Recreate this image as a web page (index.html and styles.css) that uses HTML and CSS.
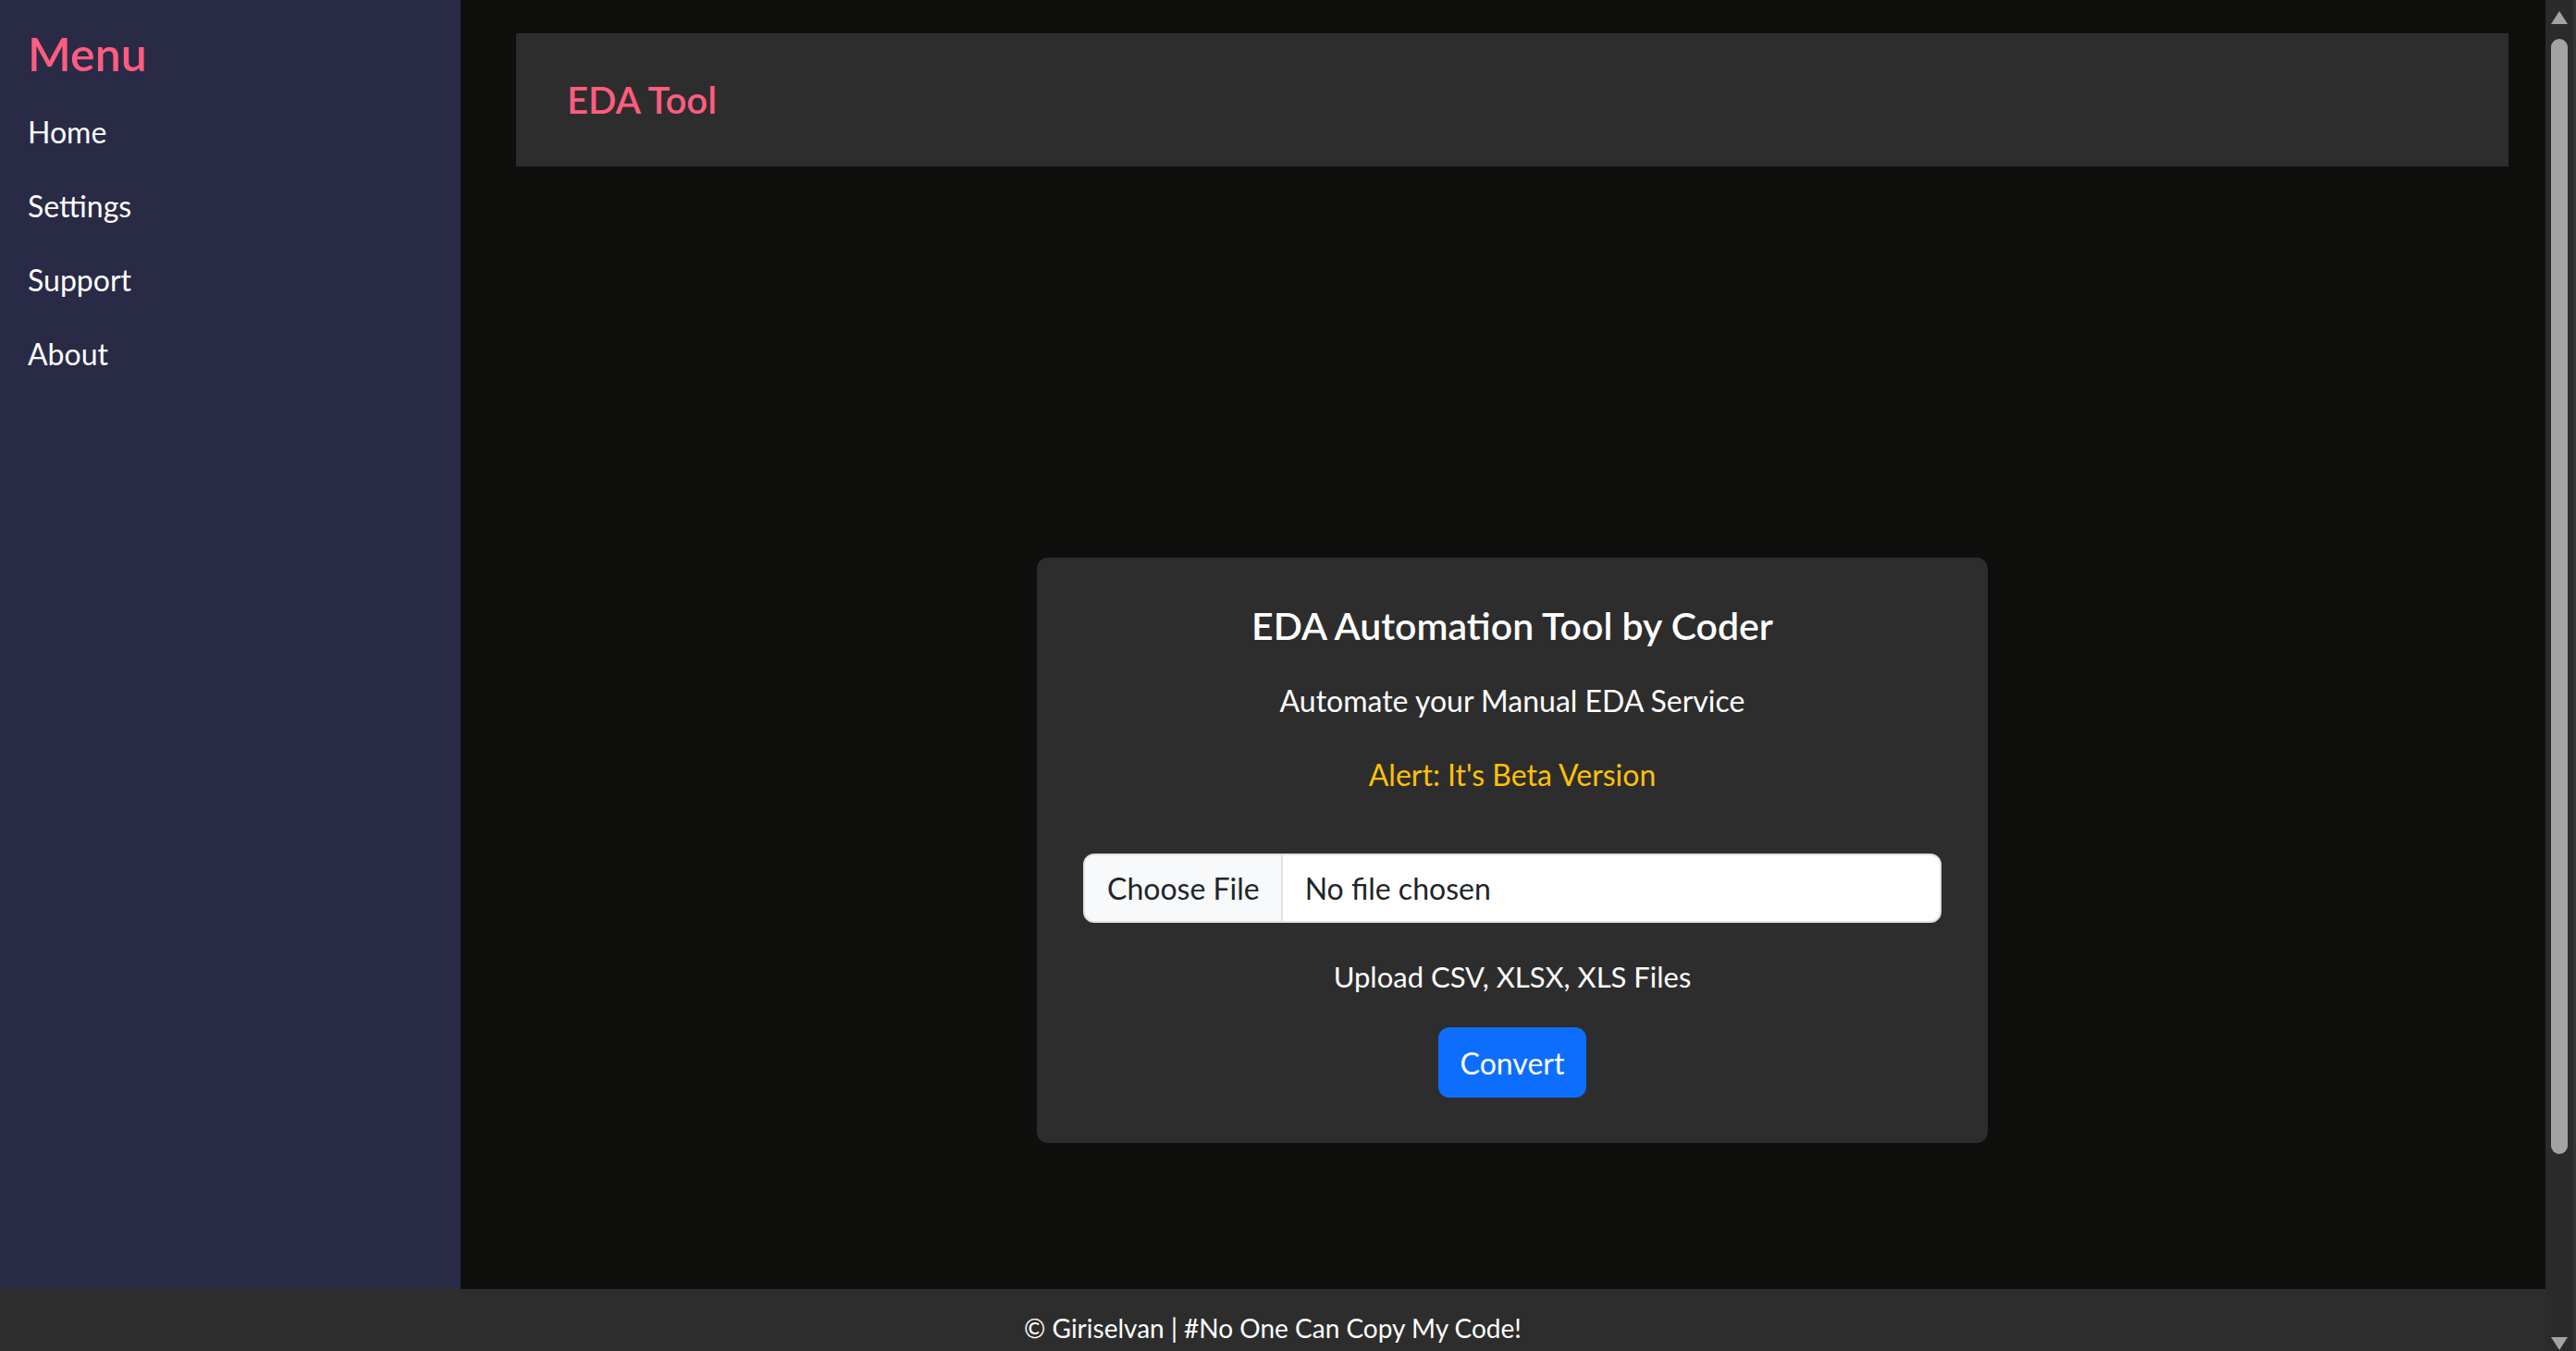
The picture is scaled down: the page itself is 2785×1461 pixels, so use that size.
FILE: index.html
```html
<!DOCTYPE html>
<html lang="en">
<head>
<meta charset="utf-8">
<title>EDA Tool</title>
<link rel="stylesheet" href="styles.css">
</head>
<body>
<div class="viewport">
  <div class="page">
    <div class="layout">
      <nav class="sidebar">
        <h2 class="menu-title">Menu</h2>
        <ul class="menu">
          <li><a href="#">Home</a></li>
          <li><a href="#">Settings</a></li>
          <li><a href="#">Support</a></li>
          <li><a href="#">About</a></li>
        </ul>
      </nav>
      <main class="main">
        <header class="topbar">
          <h1 class="brand">EDA Tool</h1>
        </header>
        <section class="stage">
          <div class="card">
            <h2 class="card-title">EDA Automation Tool by Coder</h2>
            <p class="card-sub">Automate your Manual EDA Service</p>
            <p class="card-alert">Alert: It's Beta Version</p>
            <label class="file">
              <span class="file-btn">Choose File</span>
              <span class="file-name">No file chosen</span>
            </label>
            <p class="card-hint">Upload CSV, XLSX, XLS Files</p>
            <button class="convert" type="button">Convert</button>
          </div>
        </section>
      </main>
    </div>
    <footer class="footer">
      <p class="footer-text">© Giriselvan | #No One Can Copy My Code!</p>
    </footer>
  </div>
  <div class="scrollbar">
    <div class="sb-up"><span class="tri-up"></span></div>
    <div class="sb-track"><div class="sb-thumb"></div></div>
    <div class="sb-down"><span class="tri-down"></span></div>
  </div>
</div>
</body>
</html>
```

FILE: styles.css
```css
html, body {
  margin: 0;
  padding: 0;
  height: 100%;
  background: #0f0f0e;
  font-family: "Lato", "Open Sans", sans-serif;
  color: #fff;
}

.viewport {
  display: flex;
  height: 100vh;
  overflow: hidden;
}

.page {
  flex: 1;
  min-width: 0;
  display: flex;
  flex-direction: column;
  overflow: hidden;
}

.layout {
  display: flex;
  height: 1394px;
  flex-shrink: 0;
}

.sidebar {
  width: 498px;
  flex-shrink: 0;
  box-sizing: border-box;
  background: #292a46;
  padding: 28px 0 0 30px;
}

.menu-title {
  margin: 0;
  font-size: 50px;
  line-height: 60px;
  font-weight: 600;
  color: #ff5c7f;
}

.menu {
  list-style: none;
  margin: 15px 0 0;
  padding: 0;
}

.menu a {
  display: block;
  font-size: 32px;
  line-height: 80px;
  color: #fff;
  text-decoration: none;
}

.main {
  flex: 1;
  min-width: 0;
  background: #0f0f0e;
  padding: 36px 40px 0 60px;
  display: flex;
  flex-direction: column;
}

.topbar {
  height: 144px;
  flex-shrink: 0;
  background: #2d2d2d;
  display: flex;
  align-items: center;
  padding-left: 55px;
}

.brand {
  margin: 0;
  font-size: 40px;
  line-height: 48px;
  font-weight: 600;
  color: #ff5c7f;
}

.stage {
  display: flex;
  justify-content: center;
  padding-top: 423px;
}

.card {
  width: 1028px;
  box-sizing: border-box;
  background: #2d2d2d;
  border-radius: 12px;
  padding: 50px 50px 49px;
  text-align: center;
  display: flex;
  flex-direction: column;
  align-items: center;
}

.card-title {
  margin: 0 0 37px;
  font-size: 41px;
  line-height: 48px;
  font-weight: 600;
}

.card-sub,
.card-alert,
.card-hint {
  margin: 0;
  font-size: 32px;
  line-height: 40px;
}

.card-sub {
  margin-bottom: 40px;
}

.card-alert {
  color: #ffc107;
  margin-bottom: 65px;
}

.file {
  align-self: stretch;
  display: flex;
  height: 75px;
  box-sizing: border-box;
  border: 2px solid #dee2e6;
  border-radius: 12px;
  background: #fff;
  overflow: hidden;
  color: #212529;
  font-size: 32px;
  text-align: left;
}

.file-btn {
  flex-shrink: 0;
  display: flex;
  align-items: center;
  padding: 0 23px 0 24px;
  background: #f8f9fa;
  border-right: 2px solid #dee2e6;
}

.file-name {
  display: flex;
  align-items: center;
  padding-left: 24px;
}

.card-hint {
  margin-top: 38px;
  margin-bottom: 35px;
  font-size: 31px;
}

.convert {
  height: 76px;
  box-sizing: border-box;
  padding: 2px 24px 0;
  border: 0;
  border-radius: 12px;
  background: #0d6efd;
  color: #fff;
  font-family: inherit;
  font-size: 32px;
  line-height: 74px;
}

.footer {
  flex-shrink: 0;
  height: 296px;
  background: #2d2d2d;
  text-align: center;
  padding-top: 22px;
  box-sizing: border-box;
}

.footer-text {
  margin: 0;
  font-size: 28px;
  line-height: 40px;
}

.scrollbar {
  width: 33px;
  flex-shrink: 0;
  box-sizing: border-box;
  background: #2b2b2b;
  border-right: 3px solid #353535;
  display: flex;
  flex-direction: column;
}

.sb-up {
  height: 34px;
  display: flex;
  justify-content: center;
  padding-top: 12px;
  box-sizing: border-box;
}

.sb-track {
  flex: 1;
  padding-top: 8px;
  display: flex;
  flex-direction: column;
  align-items: center;
}

.sb-thumb {
  width: 18px;
  height: 1206px;
  border-radius: 9px;
  background: #a3a3a3;
}

.sb-down {
  height: 34px;
  display: flex;
  justify-content: center;
  padding-top: 19px;
  box-sizing: border-box;
}

.tri-up {
  width: 0;
  height: 0;
  border-left: 9px solid transparent;
  border-right: 9px solid transparent;
  border-bottom: 14px solid #a3a3a3;
}

.tri-down {
  width: 0;
  height: 0;
  border-left: 9px solid transparent;
  border-right: 9px solid transparent;
  border-top: 14px solid #a3a3a3;
}
```
